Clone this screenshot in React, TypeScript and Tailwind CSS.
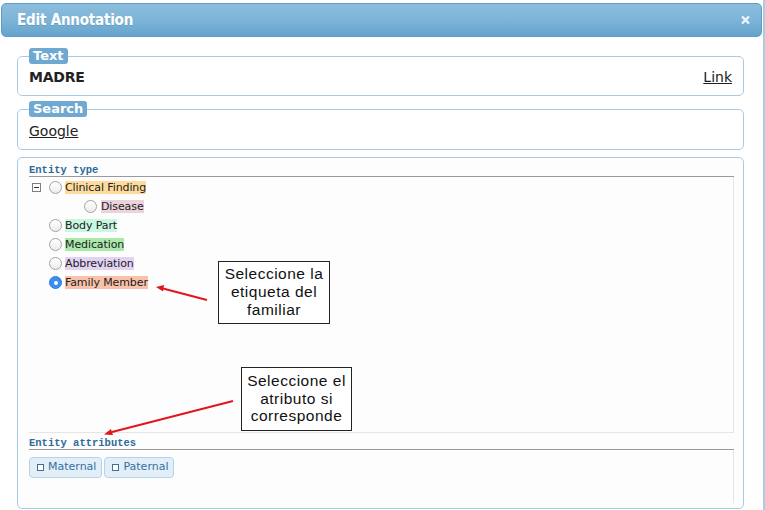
import React from "react";

const dv = { fontFamily: "'DejaVu Sans', Verdana, sans-serif" };
const mono = { fontFamily: "'Liberation Mono', 'Courier New', monospace" };
const callFont = { fontFamily: "'Liberation Sans', Arial, sans-serif" };

function Radio({ checked }: { checked?: boolean }) {
  if (checked) {
    return (
      <span className="w-[13px] h-[13px] rounded-full bg-[#3b8ef2] border border-[#2f7ddc] flex items-center justify-center shrink-0">
        <span className="w-[4px] h-[4px] rounded-full bg-white" />
      </span>
    );
  }
  return (
    <span className="w-[13px] h-[13px] rounded-full border border-[#a3a3a3] bg-gradient-to-b from-white to-[#ececec] shrink-0" />
  );
}

function Label({ text, bg }: { text: string; bg: string }) {
  return (
    <span
      className={`text-[11px] leading-[13px] h-[13px] tracking-[-0.1px] text-[#222] ${bg}`}
      style={dv}
    >
      {text}
    </span>
  );
}

function AttrBtn({ text }: { text: string }) {
  return (
    <span
      className="inline-flex items-center h-[21px] pl-[7px] pr-[5px] gap-[4px] rounded-[4px] border border-[#b5d2e8] bg-[#e2eff9] text-[#37709f] text-[11px]"
      style={dv}
    >
      <span className="w-[7px] h-[7px] border border-[#3d6f98] bg-white" />
      <span>{text}</span>
    </span>
  );
}

export default function App() {
  return (
    <div className="w-[765px] h-[510px] bg-white relative overflow-hidden border-r-2 border-[#a9cce4]">
      {/* Title bar */}
      <div className="mt-[3px] ml-[1px] w-[761px] h-[34px] rounded-[5px] border border-[#5f9dc8] bg-gradient-to-b from-[#8bbddd] via-[#7db4d8] to-[#65a3cc] flex items-center justify-between pl-[15px] pr-[11px]">
        <span
          className="text-white font-bold text-[15px] tracking-[-0.2px] [text-shadow:0_1px_0_rgba(0,0,0,0.12)]"
          style={{ fontFamily: "'DejaVu Sans Condensed', 'DejaVu Sans', sans-serif", fontStretch: "condensed" }}
        >
          Edit Annotation
        </span>
        <svg width="9" height="8" viewBox="0 0 9 8">
          <path d="M1 0.5 L8 7.5 M8 0.5 L1 7.5" stroke="#eef4fa" strokeWidth="2.4" />
        </svg>
      </div>

      <div className="pl-[17px]">
        {/* Text fieldset */}
        <fieldset className="mt-[11px] w-[727px] border border-[#a8cbe3] rounded-[5px] px-[11px]">
          <legend
            className="bg-[#6fa8d1] text-white font-bold text-[13px] leading-[16px] h-[16px] px-[4px] rounded-[3px]"
            style={dv}
          >
            Text
          </legend>
          <div className="pt-[5px] pb-[9px] flex justify-between items-center h-[31px] text-[14px] leading-[17px] text-[#222]" style={dv}>
            <span className="font-bold text-[14px] tracking-[-0.2px]">MADRE</span>
            <span className="underline">Link</span>
          </div>
        </fieldset>

        {/* Search fieldset */}
        <fieldset className="mt-[5px] w-[727px] border border-[#a8cbe3] rounded-[5px] px-[11px]">
          <legend
            className="bg-[#6fa8d1] text-white font-bold text-[13px] leading-[16px] h-[16px] px-[4px] rounded-[3px]"
            style={dv}
          >
            Search
          </legend>
          <div className="pt-[6px] pb-[9px] text-[14px] leading-[17px] text-[#222]" style={dv}>
            <span className="underline">Google</span>
          </div>
        </fieldset>

        {/* Entity box */}
        <div className="mt-[7px] w-[727px] border border-[#a8cbe3] rounded-[5px] pl-[11px] pr-[9px] pt-[2px] pb-[5px] bg-[#fdfdfe]">
          <div
            className="pt-[4px] leading-[12px] text-[10.5px] font-bold text-[#2e6b9b] border-b border-[#9a9a9a]"
            style={mono}
          >
            Entity type
          </div>
          <div className="h-[256px] border-b border-r border-[#e6e6e6] pt-[1px]">
            <div className="h-[19px] flex items-center">
              <span className="ml-[3px] w-[9px] h-[9px] border border-[#7f7f7f] flex items-center justify-center">
                <span className="w-[5px] h-[1px] bg-[#333]" />
              </span>
              <span className="ml-[8px]" />
              <Radio />
              <span className="ml-[3px]" />
              <Label text="Clinical Finding" bg="bg-[#fedb9c]" />
            </div>
            <div className="h-[19px] flex items-center pl-[55px]">
              <Radio />
              <span className="ml-[4px]" />
              <Label text="Disease" bg="bg-[#ebd2dd]" />
            </div>
            <div className="h-[19px] flex items-center pl-[20px]">
              <Radio />
              <span className="ml-[3px]" />
              <Label text="Body Part" bg="bg-[#c9f8e2]" />
            </div>
            <div className="h-[19px] flex items-center pl-[20px]">
              <Radio />
              <span className="ml-[3px]" />
              <Label text="Medication" bg="bg-[#a9e9a9]" />
            </div>
            <div className="h-[19px] flex items-center pl-[20px]">
              <Radio />
              <span className="ml-[3px]" />
              <Label text="Abbreviation" bg="bg-[#e2d3f2]" />
            </div>
            <div className="h-[19px] flex items-center pl-[20px]">
              <Radio checked />
              <span className="ml-[3px]" />
              <Label text="Family Member" bg="bg-[#f9c1aa]" />
            </div>
          </div>
          <div
            className="pt-[4px] leading-[12px] text-[10.5px] font-bold text-[#2e6b9b] border-b border-[#9a9a9a]"
            style={mono}
          >
            Entity attributes
          </div>
          <div className="h-[53px] border-r border-[#e6e6e6] pt-[7px] flex items-start gap-[2px]">
            <AttrBtn text="Maternal" />
            <AttrBtn text="Paternal" />
          </div>
        </div>
      </div>

      {/* Callouts */}
      <div
        className="absolute left-[218px] top-[261px] w-[112px] h-[63px] bg-white border border-[#222] text-[#111] text-[15.5px] leading-[18px] tracking-[0.5px] text-center pt-[3px]"
        style={callFont}
      >
        Seleccione la
        <br />
        etiqueta del
        <br />
        familiar
      </div>
      <div
        className="absolute left-[241px] top-[367px] w-[111px] h-[64px] bg-white border border-[#222] text-[#111] text-[15.5px] leading-[17.5px] tracking-[0.5px] text-center pt-[4px]"
        style={callFont}
      >
        Seleccione el
        <br />
        atributo si
        <br />
        corresponde
      </div>

      {/* Arrows */}
      <svg className="absolute left-0 top-0 pointer-events-none" width="765" height="510">
        <line x1="207" y1="300" x2="163" y2="288.5" stroke="#e3141c" strokeWidth="2" />
        <path d="M156 287 L164 285 L163 291.5 Z" fill="#e3141c" />
        <line x1="233" y1="401" x2="112" y2="432" stroke="#e3141c" strokeWidth="2" />
        <path d="M104 434.5 L111 429 L113 435 Z" fill="#e3141c" />
      </svg>
    </div>
  );
}
